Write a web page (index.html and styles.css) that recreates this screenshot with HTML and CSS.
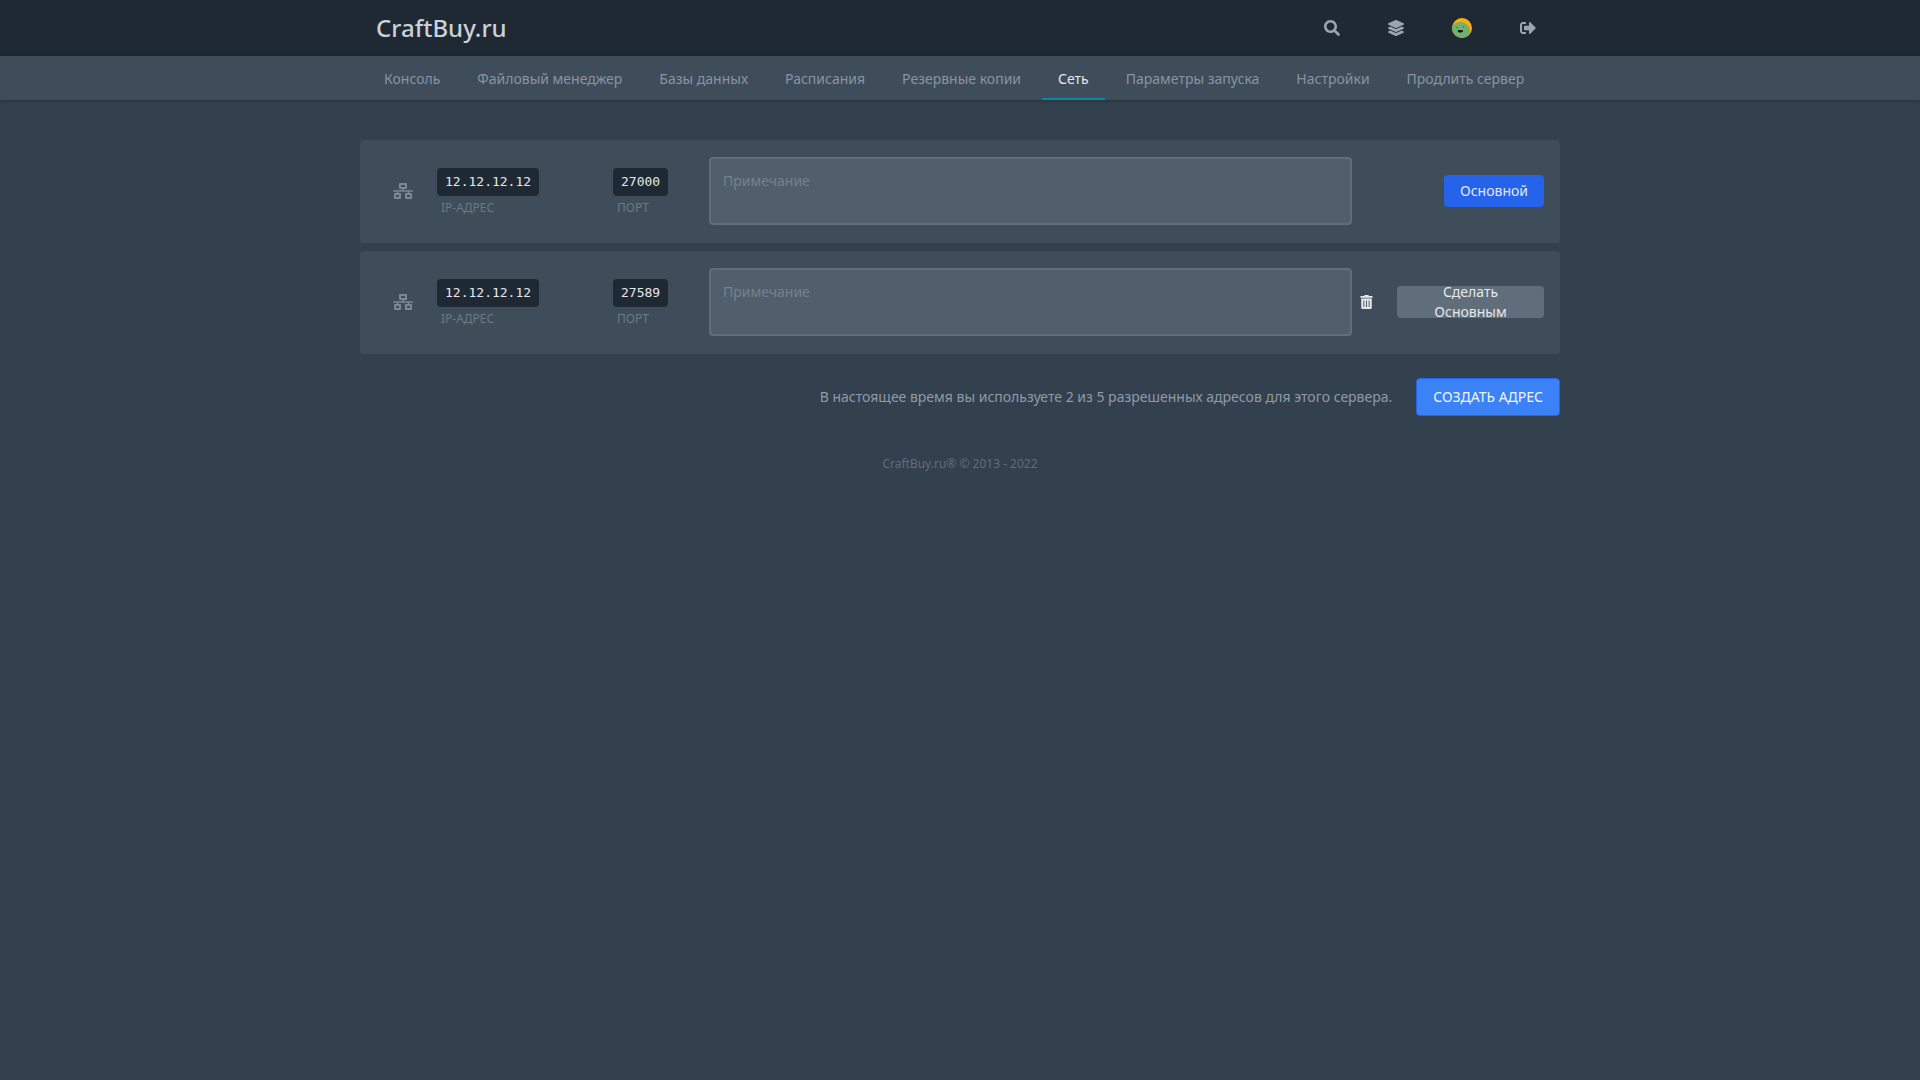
FILE: index.html
```html
<!DOCTYPE html>
<html lang="ru">
<head>
<meta charset="utf-8">
<meta name="viewport" content="width=device-width, initial-scale=1">
<title>CraftBuy.ru</title>
<link rel="stylesheet" href="styles.css">
</head>
<body>
<header class="topbar">
  <div class="topbar-inner">
    <a class="logo" href="#">CraftBuy.ru</a>
    <div class="tools">
      <button class="tool" type="button" aria-label="Поиск"><svg class="icon" viewBox="0 0 512 512"><path d="M505 442.7L405.3 343c-4.500-4.500-10.600-7-17-7H372c27.600-35.300 44-79.700 44-128C416 93.100 322.900 0 208 0S0 93.100 0 208s93.100 208 208 208c48.300 0 92.700-16.400 128-44v16.300c0 6.400 2.500 12.500 7 17l99.700 99.700c9.400 9.400 24.600 9.400 33.900 0l28.300-28.300c9.400-9.400 9.400-24.600.1-34zM208 336c-70.700 0-128-57.200-128-128 0-70.700 57.200-128 128-128 70.700 0 128 57.200 128 128 0 70.700-57.200 128-128 128z"/></svg></button>
      <a class="tool" href="#" aria-label="Серверы"><svg class="icon" viewBox="0 0 512 512"><path d="M12.410 148.020l232.940 105.670c6.800 3.090 14.490 3.090 21.290 0l232.940-105.670c16.550-7.510 16.550-32.520 0-40.030L266.650 2.310a25.607 25.607 0 0 0-21.290 0L12.410 107.980c-16.550 7.510-16.550 32.530 0 40.040zm487.180 88.280l-58.090-26.330-161.640 73.270c-7.560 3.430-15.590 5.170-23.860 5.170s-16.290-1.740-23.860-5.170L70.510 209.970l-58.100 26.330c-16.550 7.500-16.550 32.500 0 40l232.940 105.590c6.800 3.080 14.490 3.080 21.290 0L499.590 276.300c16.550-7.500 16.550-32.500 0-40zm0 127.800l-57.870-26.230-161.860 73.370c-7.560 3.430-15.590 5.170-23.860 5.170s-16.290-1.740-23.860-5.170L70.290 337.870 12.410 364.100c-16.550 7.500-16.550 32.500 0 40l232.940 105.590c6.800 3.080 14.490 3.080 21.290 0L499.590 404.100c16.550-7.500 16.550-32.500 0-40z"/></svg></a>
      <a class="tool" href="#" aria-label="Аккаунт"><svg class="avatar" viewBox="0 0 36 36"><defs><clipPath id="face"><circle cx="18" cy="18" r="18"/></clipPath></defs><g clip-path="url(#face)"><path fill="#ffad08" d="M0 0h36v36H0z"/><circle cx="15" cy="25" r="18" fill="#73b06f"/><path d="M10 22h10c0 5-9 6-10 0z" fill="#000"/><path d="M9 18l1-2M20 17l1-2" stroke="#000"/></g></svg></a>
      <button class="tool" type="button" aria-label="Выйти"><svg class="icon" viewBox="0 0 512 512"><path d="M497 273L329 441c-15 15-41 4.500-41-17v-96H152c-13.300 0-24-10.700-24-24v-96c0-13.300 10.700-24 24-24h136V88c0-21.400 25.900-32 41-17l168 168c9.300 9.400 9.300 24.600 0 34zM192 436v-40c0-6.600-5.400-12-12-12H96c-17.700 0-32-14.300-32-32V160c0-17.700 14.300-32 32-32h84c6.600 0 12-5.400 12-12V76c0-6.600-5.400-12-12-12H96c-53 0-96 43-96 96v192c0 53 43 96 96 96h84c6.600 0 12-5.400 12-12z"/></svg></button>
    </div>
  </div>
</header>
<nav class="subnav">
  <div class="subnav-inner">
    <a href="#">Консоль</a>
    <a href="#">Файловый менеджер</a>
    <a href="#">Базы данных</a>
    <a href="#">Расписания</a>
    <a href="#">Резервные копии</a>
    <a class="active" href="#" aria-current="page">Сеть</a>
    <a href="#">Параметры запуска</a>
    <a href="#">Настройки</a>
    <a href="#">Продлить сервер</a>
  </div>
</nav>
<main class="content">
  <section class="row">
    <svg class="network" viewBox="0 0 640 512"><path d="M640 264v-16c0-8.840-7.160-16-16-16H344v-40h72c17.670 0 32-14.330 32-32V32c0-17.670-14.330-32-32-32H224c-17.670 0-32 14.330-32 32v128c0 17.670 14.330 32 32 32h72v40H16c-8.840 0-16 7.160-16 16v16c0 8.840 7.160 16 16 16h104v40H64c-17.670 0-32 14.330-32 32v128c0 17.670 14.330 32 32 32h160c17.670 0 32-14.330 32-32V352c0-17.670-14.330-32-32-32h-56v-40h304v40h-56c-17.670 0-32 14.330-32 32v128c0 17.670 14.330 32 32 32h160c17.670 0 32-14.330 32-32V352c0-17.670-14.330-32-32-32h-56v-40h104c8.840 0 16-7.160 16-16zM256 128V64h128v64H256zm-64 320H96v-64h96v64zm352 0h-96v-64h96v64z"/></svg>
    <div class="field ip"><code>12.12.12.12</code><span class="caption">IP-адрес</span></div>
    <div class="field port"><code>27000</code><span class="caption">Порт</span></div>
    <textarea class="note" placeholder="Примечание" aria-label="Примечание"></textarea>
    <div class="actions"><button class="btn primary" type="button">Основной</button></div>
  </section>
  <section class="row">
    <svg class="network" viewBox="0 0 640 512"><path d="M640 264v-16c0-8.840-7.160-16-16-16H344v-40h72c17.670 0 32-14.330 32-32V32c0-17.670-14.330-32-32-32H224c-17.670 0-32 14.330-32 32v128c0 17.670 14.330 32 32 32h72v40H16c-8.840 0-16 7.160-16 16v16c0 8.840 7.160 16 16 16h104v40H64c-17.670 0-32 14.330-32 32v128c0 17.670 14.330 32 32 32h160c17.670 0 32-14.330 32-32V352c0-17.670-14.330-32-32-32h-56v-40h304v40h-56c-17.670 0-32 14.330-32 32v128c0 17.670 14.330 32 32 32h160c17.670 0 32-14.330 32-32V352c0-17.670-14.330-32-32-32h-56v-40h104c8.840 0 16-7.160 16-16zM256 128V64h128v64H256zm-64 320H96v-64h96v64zm352 0h-96v-64h96v64z"/></svg>
    <div class="field ip"><code>12.12.12.12</code><span class="caption">IP-адрес</span></div>
    <div class="field port"><code>27589</code><span class="caption">Порт</span></div>
    <textarea class="note" placeholder="Примечание" aria-label="Примечание"></textarea>
    <div class="actions">
      <button class="delete" type="button" aria-label="Удалить"><svg viewBox="0 0 448 512"><path d="M32 464a48 48 0 0 0 48 48h288a48 48 0 0 0 48-48V128H32zm272-256a16 16 0 0 1 32 0v224a16 16 0 0 1-32 0zm-96 0a16 16 0 0 1 32 0v224a16 16 0 0 1-32 0zm-96 0a16 16 0 0 1 32 0v224a16 16 0 0 1-32 0zM432 32H312l-9.400-18.700A24 24 0 0 0 281.100 0H166.800a23.720 23.720 0 0 0-21.400 13.300L136 32H16A16 16 0 0 0 0 48v32a16 16 0 0 0 16 16h416a16 16 0 0 0 16-16V48a16 16 0 0 0-16-16z"/></svg></button>
      <button class="btn secondary" type="button">Сделать Основным</button>
    </div>
  </section>
  <div class="summary">
    <p>В настоящее время вы используете 2 из 5 разрешенных адресов для этого сервера.</p>
    <button class="create" type="button">Создать адрес</button>
  </div>
</main>
<footer class="footer"><a href="#">CraftBuy.ru®</a> © 2013 - 2022</footer>
</body>
</html>
```
FILE: styles.css
```css
* { box-sizing: border-box; }

body {
  margin: 0;
  background: #33404d;
  color: #cad1d8;
  font: 14px/20px "Noto Sans", sans-serif;
}

a { color: inherit; text-decoration: none; }

button {
  margin: 0;
  padding: 0;
  border: 0;
  background: none;
  color: inherit;
  font: inherit;
  cursor: pointer;
}

/* Top bar */
.topbar { background: #1f2933; }

.topbar-inner {
  display: flex;
  align-items: center;
  justify-content: space-between;
  max-width: 1200px;
  height: 56px;
  margin: 0 auto;
}

.logo {
  padding: 0 16px;
  font-size: 24px;
  line-height: 32px;
  font-weight: 500;
}

.tools { display: flex; height: 100%; }

.tool {
  display: flex;
  align-items: center;
  padding: 0 24px;
  color: #9aa5b1;
}

.icon { width: 16px; height: 16px; fill: currentColor; }
.avatar { width: 20px; height: 20px; }

/* Server navigation */
.subnav {
  background: #3f4d5a;
  box-shadow: 0 1px 3px rgba(0, 0, 0, 0.25);
}

.subnav-inner {
  display: flex;
  gap: 5px;
  max-width: 1200px;
  margin: 0 auto;
  padding: 0 8px;
}

.subnav a {
  padding: 13px 16px 11px;
  color: #8794a1;
  white-space: nowrap;
}

.subnav .active {
  color: #e4e7eb;
  box-shadow: inset 0 -2px #0e87a5;
}

/* Allocations */
.content {
  max-width: 1200px;
  margin: 40px auto 0;
}

.row {
  display: flex;
  align-items: center;
  margin-bottom: 8px;
  padding: 17px 16px 18px;
  border-radius: 4px;
  background: #3f4d5a;
}

.network {
  width: 20px;
  height: 16px;
  margin: 0 24px 0 17px;
  fill: #7b8794;
}

.field {
  display: flex;
  flex-direction: column;
  align-items: flex-start;
  padding-top: 2px;
}

.ip { width: 176px; }
.port { width: 96px; }

.field code {
  padding: 4px 8px;
  border-radius: 4px;
  background: #1f2933;
  color: #e4e7eb;
  font: 13px/20px "DejaVu Sans Mono", monospace;
}

.caption {
  padding: 4px 4px 0;
  color: #6b7886;
  font-size: 12px;
  line-height: 16px;
  text-transform: uppercase;
}

.note {
  flex: 1;
  height: 68px;
  padding: 12px;
  border: 2px solid #606d7b;
  border-radius: 4px;
  background: #515f6c;
  color: #cad1d8;
  font: inherit;
  resize: none;
}

.note::placeholder { color: #74818e; opacity: 1; }

.actions {
  display: flex;
  align-items: center;
  justify-content: flex-end;
  gap: 24px;
  width: 192px;
}

.delete { display: flex; color: #e4e7eb; }
.delete svg { width: 13px; height: 14px; fill: currentColor; }

.btn {
  display: flex;
  align-items: center;
  justify-content: center;
  height: 32px;
  padding: 0 16px;
  border-radius: 4px;
  color: #e4e7eb;
}

.primary { background: #2563eb; }
.secondary { width: 147px; padding: 0 32px; background: #606d7b; }

.summary {
  display: flex;
  align-items: center;
  justify-content: flex-end;
  gap: 24px;
  margin-top: 24px;
  color: #8f9ba8;
}

.summary p { margin: 0; }

.create {
  padding: 8px 16px;
  border: 1px solid #2563eb;
  border-radius: 4px;
  background: #3b82f6;
  color: #eff6ff;
  text-transform: uppercase;
}

.footer {
  margin: 40px 0;
  color: #606d7b;
  font-size: 12px;
  line-height: 16px;
  text-align: center;
}
```
